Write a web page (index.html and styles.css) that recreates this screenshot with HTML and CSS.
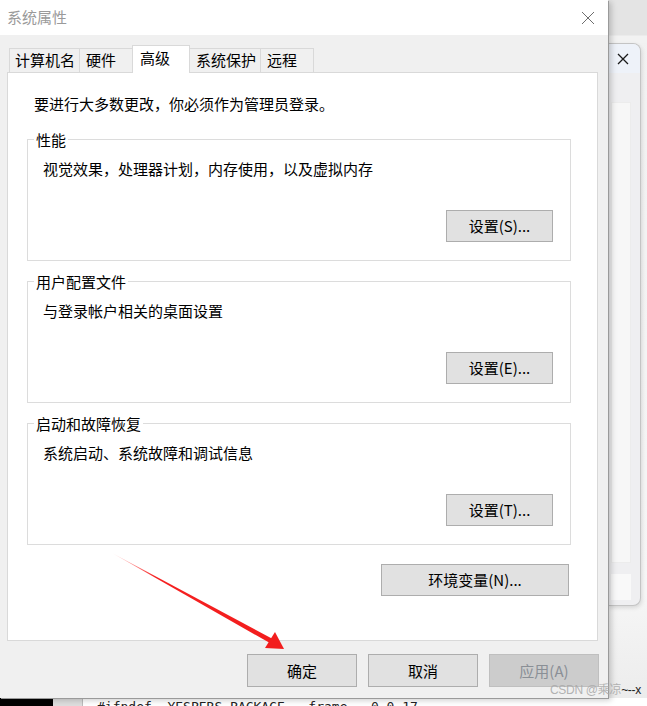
FILE: index.html
```html
<!DOCTYPE html>
<html lang="zh-CN">
<head>
<meta charset="utf-8">
<title>系统属性</title>
<link rel="stylesheet" href="styles.css">
</head>
<body>
<div class="screen">
  <div class="main">
    <div class="dialog">
      <div class="titlebar">
        <span class="title">系统属性</span>
        <svg class="close" width="14" height="14" viewBox="0 0 14 14"><path d="M1 1 L13 13 M13 1 L1 13" stroke="#6e6e6e" stroke-width="1" fill="none"/></svg>
      </div>
      <div class="body">
        <div class="tabs">
          <div class="tab">计算机名</div>
          <div class="tab">硬件</div>
          <div class="tab tab-active">高级</div>
          <div class="tab">系统保护</div>
          <div class="tab">远程</div>
        </div>
        <div class="panel">
          <p class="intro">要进行大多数更改，你必须作为管理员登录。</p>
          <fieldset class="group">
            <legend>性能</legend>
            <p class="desc">视觉效果，处理器计划，内存使用，以及虚拟内存</p>
            <div class="group-actions"><button class="btn btn-set">设置(S)...</button></div>
          </fieldset>
          <fieldset class="group">
            <legend>用户配置文件</legend>
            <p class="desc">与登录帐户相关的桌面设置</p>
            <div class="group-actions"><button class="btn btn-set">设置(E)...</button></div>
          </fieldset>
          <fieldset class="group">
            <legend>启动和故障恢复</legend>
            <p class="desc">系统启动、系统故障和调试信息</p>
            <div class="group-actions"><button class="btn btn-set">设置(T)...</button></div>
          </fieldset>
          <div class="env-row"><button class="btn btn-env">环境变量(N)...</button></div>
        </div>
        <div class="footer">
          <button class="btn btn-foot">确定</button>
          <button class="btn btn-foot">取消</button>
          <button class="btn btn-foot btn-disabled">应用(A)</button>
        </div>
      </div>
    </div>
    <div class="side">
      <div class="side-top"></div>
      <div class="bgwin">
        <div class="bgwin-head">
          <svg width="12" height="12" viewBox="0 0 12 12"><path d="M1 1 L11 11 M11 1 L1 11" stroke="#1a1a1a" stroke-width="1.3" fill="none"/></svg>
        </div>
        <div class="bgwin-body">
          <div class="bgwin-pane"></div>
          <div class="bgwin-bar"></div>
        </div>
      </div>
    </div>
  </div>
  <div class="strip">
    <div class="strip-black"></div>
    <div class="strip-grey"></div>
    <div class="strip-code">#ifndef&nbsp;&nbsp;YESPERS_PACKAGE&nbsp;&nbsp;&nbsp;frame&nbsp;&nbsp;&nbsp;0.0.17</div>
  </div>
  <svg class="arrow" width="647" height="706" viewBox="0 0 647 706">
    <defs>
      <linearGradient id="fade" x1="112" y1="553" x2="284" y2="649" gradientUnits="userSpaceOnUse">
        <stop offset="0" stop-color="#ff2a2a" stop-opacity="0.1"/>
        <stop offset="0.25" stop-color="#f52020" stop-opacity="1"/>
        <stop offset="1" stop-color="#f21d1d"/>
      </linearGradient>
    </defs>
    <polygon points="112,553 270.8,643.6 273.2,639.2" fill="url(#fade)"/>
    <polygon points="284,649 265,648 275,632" fill="#f21d1d"/>
  </svg>
  <div class="watermark">CSDN @乘凉<span class="wm-dark">~--x</span></div>
</div>
</body>
</html>
```
FILE: styles.css
```css
* { box-sizing: border-box; }
html, body { margin: 0; padding: 0; }
body {
  width: 647px;
  height: 706px;
  overflow: hidden;
  background: #f2f2f2;
  font-family: "Noto Sans CJK SC", "Microsoft YaHei", sans-serif;
  font-size: 15px;
  color: #000;
}
.screen {
  position: relative;
  width: 647px;
  height: 706px;
  display: flex;
  flex-direction: column;
}
.main {
  display: flex;
  height: 698px;
  background: linear-gradient(#f1f1f1, #f6f6f6 85%, #ececec);
}
.dialog {
  width: 608px;
  height: 698px;
  flex: none;
  background: #f0f0f0;
  display: flex;
  flex-direction: column;
  position: relative;
  z-index: 2;
  box-shadow: 1px 1px 0 #9a9a9a, 3px 2px 6px rgba(0,0,0,0.22);
}
.titlebar {
  height: 35px;
  background: #fff;
  display: flex;
  align-items: center;
  justify-content: space-between;
  padding: 0 13px 0 7px;
}
.title {
  color: #9a9a9a;
  line-height: 20px;
  margin-top: -1px;
}
.close { display: block; }
.body {
  flex: 1;
  padding-top: 10px;
}
.tabs {
  display: flex;
  align-items: flex-end;
  height: 27px;
  padding-left: 9px;
  position: relative;
  z-index: 1;
}
.tab {
  min-width: 54px;
  height: 24px;
  padding: 0 4px 0 6px;
  margin-left: -1px;
  border: 1px solid #d9d9d9;
  border-bottom: none;
  background: #f0f0f0;
  text-align: left;
  line-height: 22px;
  white-space: nowrap;
}
.tab:first-child { margin-left: 0; padding-left: 5px; }
.tab-active {
  min-width: 58px;
  height: 28px;
  padding-left: 7px;
  margin-bottom: -1px;
  background: #fff;
  line-height: 24px;
  position: relative;
}
.panel {
  margin-left: 7px;
  width: 591px;
  height: 569px;
  background: #fff;
  border: 1px solid #d9d9d9;
  padding: 21px 26px 0 19px;
}
.intro {
  margin: 0 0 0 7px;
  line-height: 20px;
}
.group {
  margin: 16px 0 0 0;
  padding: 0 17px 18px 15px;
  border: 1px solid #dcdcdc;
  min-inline-size: 0;
  width: 544px;
}
.group + .group { margin-top: 11px; }
.group legend {
  margin-left: -9px;
  padding: 0 2px;
  line-height: 19px;
}
.desc {
  margin: 10px 0 0 0;
  line-height: 20px;
}
.group-actions {
  display: flex;
  justify-content: flex-end;
  margin-top: 31px;
}
.btn {
  font-family: inherit;
  font-size: 15px;
  color: #000;
  background: #e1e1e1;
  border: 1px solid #adadad;
  border-radius: 0;
  padding: 0;
  margin: 0;
  line-height: 20px;
  text-align: center;
}
.btn-set { width: 107px; height: 32px; }
.env-row {
  display: flex;
  justify-content: flex-end;
  margin-top: 19px;
  padding-right: 2px;
}
.btn-env { width: 188px; height: 32px; }
.footer {
  display: flex;
  justify-content: flex-end;
  gap: 11px;
  padding: 13px 9px 0 0;
}
.btn-foot { width: 110px; height: 33px; }
.btn-disabled {
  background: #cccccc;
  border-color: #bfbfbf;
  color: #8a8f96;
}
.side {
  flex: 1;
  display: flex;
  flex-direction: column;
  position: relative;
  z-index: 1;
}
.side-top {
  height: 43px;
  background: linear-gradient(#e4e4e4 0, #e4e4e4 35px, #f2f2f2 36px);
}
.bgwin {
  width: 33px;
  height: 563px;
  border: 1px solid #c4c4c4;
  border-left: none;
  border-radius: 0 8px 8px 0;
  background: #efeff1;
  overflow: hidden;
  box-shadow: 1px 2px 4px rgba(0,0,0,0.12);
}
.bgwin-head {
  height: 29px;
  background: #eef2f9;
  display: flex;
  align-items: center;
  padding-left: 9px;
}
.bgwin-head svg { display: block; }
.bgwin-body {
  display: flex;
  flex-direction: column;
  padding: 29px 0 0 3px;
}
.bgwin-pane {
  width: 20px;
  height: 461px;
  background: #f7f7f7;
  border: 1px solid #ececec;
}
.bgwin-bar {
  width: 20px;
  height: 26px;
  margin-top: 11px;
  background: #f9f9f9;
}
.strip {
  height: 8px;
  display: flex;
  background: #fff;
  overflow: hidden;
}
.strip-black { width: 53px; background: #000; }
.strip-grey { width: 30px; background: #dedede; border-right: 1px solid #bdbdbd; }
.strip-code {
  flex: 1;
  font-family: "DejaVu Sans Mono", monospace;
  font-size: 13px;
  line-height: 14px;
  padding: 2px 0 0 14px;
  color: #222;
  white-space: nowrap;
}
.arrow {
  position: absolute;
  left: 0;
  top: 0;
  z-index: 5;
  pointer-events: none;
}
.watermark {
  position: absolute;
  left: 550px;
  top: 682px;
  z-index: 6;
  font-family: "Liberation Sans", "Noto Sans CJK SC", sans-serif;
  font-size: 12px;
  line-height: 16px;
  letter-spacing: -0.3px;
  color: rgba(170,170,170,0.9);
  white-space: nowrap;
}
.wm-dark { color: #222; }
```
